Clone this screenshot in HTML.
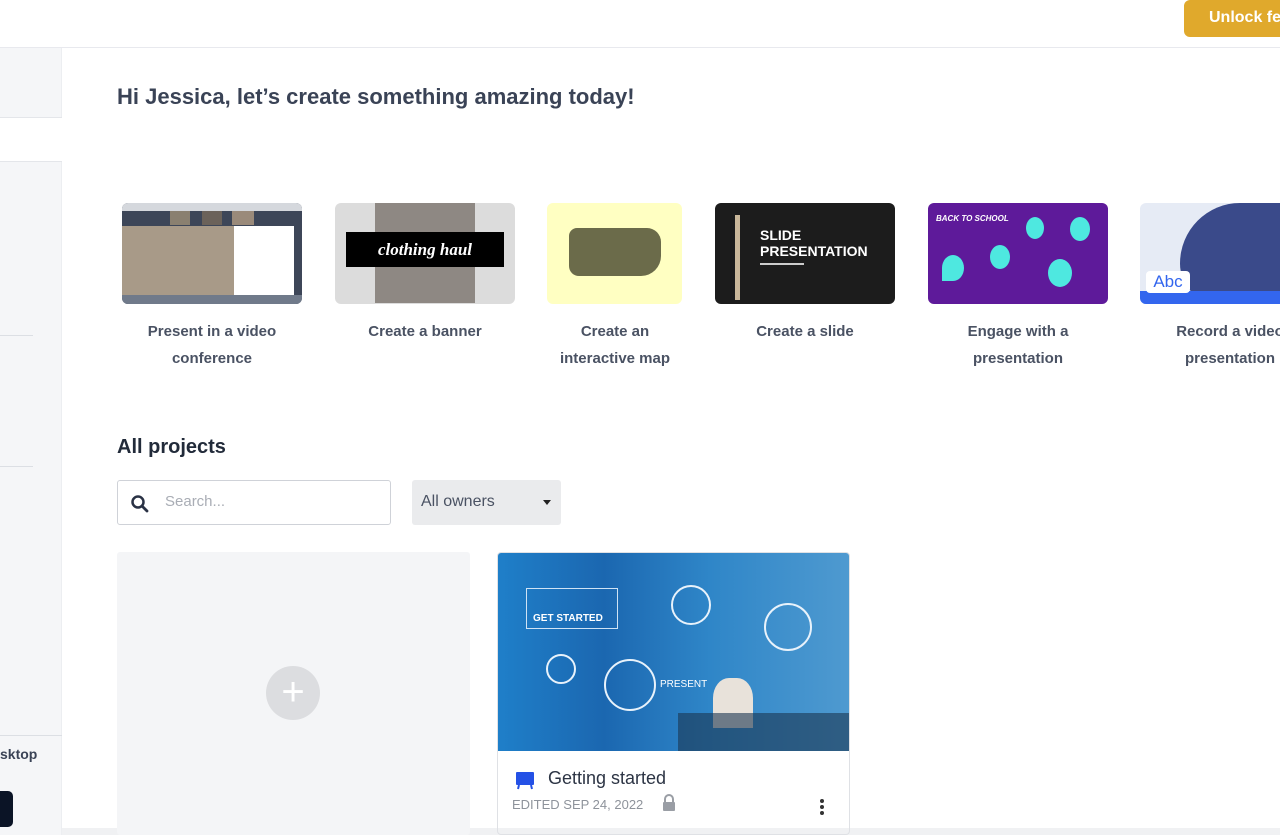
<!DOCTYPE html>
<html><head><meta charset="utf-8"><style>
*{margin:0;padding:0;box-sizing:border-box}
body{width:1280px;height:835px;overflow:hidden;background:#fff;font-family:"Liberation Sans",sans-serif;position:relative;color:#333d4f}
.abs{position:absolute}
.side{left:0;top:48px;width:62px;height:787px;background:#f5f6f8;border-right:1px solid #eceef1}
.cap{font-size:15px;color:#4a5263;text-align:center;line-height:27px;font-weight:bold}
.th{border-radius:6px;overflow:hidden;top:203px;height:101px}
</style></head><body>
<div class="abs" style="left:0;top:47px;width:1280px;height:1px;background:#e8e9ee"></div>
<div class="abs" style="left:1184px;top:0;width:110px;height:37px;background:#e0a92c;border-radius:0 0 0 6px;border-radius:6px;color:#fff;font-weight:bold;font-size:16px;line-height:36px;padding-left:25px">Unlock fe</div>
<div class="abs side"></div>
<div class="abs" style="left:0;top:117px;width:62px;height:45px;background:#fff;border-top:1px solid #e4e6ea;border-bottom:1px solid #e4e6ea"></div>
<div class="abs" style="left:0;top:335px;width:33px;height:1px;background:#dcdfe4"></div>
<div class="abs" style="left:0;top:466px;width:33px;height:1px;background:#dcdfe4"></div>
<div class="abs" style="left:0;top:735px;width:62px;height:1px;background:#dcdfe4"></div>
<div class="abs" style="left:0;top:746px;font-size:14px;font-weight:bold;color:#3a4356">sktop</div>
<div class="abs" style="left:0;top:791px;width:13px;height:36px;background:#0b1426;border-radius:0 5px 5px 0"></div>
<div class="abs" style="left:62px;top:828px;width:1218px;height:7px;background:#f0f1f3"></div>

<div class="abs" style="left:117px;top:84px;font-size:22px;font-weight:bold;color:#3a4356">Hi Jessica, let’s create something amazing today!</div>

<div class="abs th" style="left:122px;width:180px;background:#3d4658">
 <div class="abs" style="left:0;top:0;width:180px;height:8px;background:#d5d8dd"></div>
 <div class="abs" style="left:48px;top:8px;width:20px;height:14px;background:#8a8070"></div>
 <div class="abs" style="left:80px;top:8px;width:20px;height:14px;background:#6b625a"></div>
 <div class="abs" style="left:110px;top:8px;width:22px;height:14px;background:#9a8a7a"></div>
 <div class="abs" style="left:0;top:23px;width:112px;height:70px;background:#a89a88"></div>
 <div class="abs" style="left:112px;top:23px;width:60px;height:70px;background:#fff"></div>
 <div class="abs" style="left:0;top:92px;width:180px;height:9px;background:#707a8a"></div>
</div>
<div class="abs th" style="left:335px;width:180px;background:#dcdcdc">
 <div class="abs" style="left:40px;top:0;width:100px;height:100px;background:#5a5048;opacity:.6"></div>
 <div class="abs" style="left:11px;top:29px;width:158px;height:35px;background:#000;color:#fff;font-family:'Liberation Serif',serif;font-style:italic;font-weight:bold;font-size:17px;text-align:center;line-height:35px">clothing haul</div>
</div>
<div class="abs th" style="left:547px;width:135px;background:#ffffc2">
 <div class="abs" style="left:22px;top:25px;width:92px;height:48px;background:#6b6b4a;border-radius:8px 14px 20px 10px"></div>
</div>
<div class="abs th" style="left:715px;width:180px;background:#1c1c1c;color:#fff">
 <div class="abs" style="left:45px;top:24px;font-size:14px;font-weight:bold;line-height:16px">SLIDE<br>PRESENTATION</div>
 <div class="abs" style="left:45px;top:60px;width:44px;height:2px;background:#ccc"></div>
 <div class="abs" style="left:20px;top:12px;width:5px;height:85px;background:#c9b79a"></div>
</div>
<div class="abs th" style="left:928px;width:180px;background:#5e1a9a;color:#fff">
 <div class="abs" style="left:8px;top:11px;font-size:8px;font-weight:bold;font-style:italic">BACK TO SCHOOL</div>
 <div class="abs" style="left:14px;top:52px;width:22px;height:26px;background:#4ee8e0;border-radius:50% 50% 50% 0"></div>
 <div class="abs" style="left:62px;top:42px;width:20px;height:24px;background:#4ee8e0;border-radius:50%"></div>
 <div class="abs" style="left:98px;top:14px;width:18px;height:22px;background:#4ee8e0;border-radius:50%"></div>
 <div class="abs" style="left:142px;top:14px;width:20px;height:24px;background:#4ee8e0;border-radius:50%"></div>
 <div class="abs" style="left:120px;top:56px;width:24px;height:28px;background:#4ee8e0;border-radius:50%"></div>
</div>
<div class="abs th" style="left:1140px;width:140px;background:#e6ebf5;border-radius:6px 0 0 6px">
 <div class="abs" style="left:40px;top:0;width:100px;height:101px;background:#3a4a8a;border-radius:60% 0 0 40%"></div>
 <div class="abs" style="left:0;top:88px;width:140px;height:13px;background:#3366ee"></div>
 <div class="abs" style="left:6px;top:68px;width:44px;height:22px;background:#fff;border-radius:4px;color:#3366ee;font-size:17px;text-align:center;line-height:22px">Abc</div>
</div>

<div class="abs cap" style="left:122px;top:318px;width:180px">Present in a video<br>conference</div>
<div class="abs cap" style="left:335px;top:318px;width:180px">Create a banner</div>
<div class="abs cap" style="left:525px;top:318px;width:180px">Create an<br>interactive map</div>
<div class="abs cap" style="left:715px;top:318px;width:180px">Create a slide</div>
<div class="abs cap" style="left:928px;top:318px;width:180px">Engage with a<br>presentation</div>
<div class="abs cap" style="left:1140px;top:318px;width:180px">Record a video<br>presentation</div>

<div class="abs" style="left:117px;top:436px;font-size:20px;font-weight:bold;color:#222b3a">All projects</div>
<div class="abs" style="left:117px;top:480px;width:274px;height:45px;border:1px solid #cfd2d8;border-radius:3px">
 <svg class="abs" style="left:12px;top:13px" width="20" height="20" viewBox="0 0 20 20"><circle cx="8" cy="8" r="5.5" fill="none" stroke="#2a3245" stroke-width="2.5"/><path d="M12 12l5 5" stroke="#2a3245" stroke-width="2.8" stroke-linecap="round"/></svg>
 <div class="abs" style="left:47px;top:12px;font-size:15px;color:#a9adb5">Search...</div>
</div>
<div class="abs" style="left:412px;top:480px;width:149px;height:45px;background:#eaebed;border-radius:3px">
 <div class="abs" style="left:9px;top:13px;font-size:16px;color:#4a5263">All owners</div>
 <div class="abs" style="left:131px;top:20px;border:4px solid transparent;border-top:5px solid #222;border-bottom:0"></div>
</div>

<div class="abs" style="left:117px;top:552px;width:353px;height:283px;background:#f4f5f7;border-radius:3px">
 <div class="abs" style="left:149px;top:114px;width:54px;height:54px;border-radius:50%;background:#dcdde0;color:#fff;font-size:40px;line-height:52px;text-align:center">+</div>
</div>
<div class="abs" style="left:497px;top:552px;width:353px;height:283px;border:1px solid #dfe1e5;border-radius:4px;overflow:hidden">
 <div class="abs" style="left:0;top:0;width:353px;height:198px;background:linear-gradient(90deg,#1f7fc9,#1b67b0 30%,#2f86c8 60%,#4f9ad0)">
  <div class="abs" style="left:28px;top:35px;width:92px;height:41px;border:1px solid #cfe3f5;color:#fff;font-size:10px;font-weight:bold;padding:25px 0 0 6px;line-height:10px">GET STARTED</div>
  <div class="abs" style="left:173px;top:32px;width:40px;height:40px;border:2px solid #e8f2fb;border-radius:50%"></div>
  <div class="abs" style="left:266px;top:50px;width:48px;height:48px;border:2px solid #e8f2fb;border-radius:50%"></div>
  <div class="abs" style="left:48px;top:101px;width:30px;height:30px;border:2px solid #e8f2fb;border-radius:50%"></div>
  <div class="abs" style="left:106px;top:106px;width:52px;height:52px;border:2px solid #e8f2fb;border-radius:50%"></div>
  <div class="abs" style="left:162px;top:126px;color:#fff;font-size:10px">PRESENT</div>
  <div class="abs" style="left:215px;top:125px;width:40px;height:50px;background:#e8e2da;border-radius:40% 40% 0 0"></div>
  <div class="abs" style="left:180px;top:160px;width:173px;height:38px;background:#1b3550;opacity:.6"></div>
 </div>
 <svg class="abs" style="left:17px;top:217px" width="20" height="20" viewBox="0 0 20 20"><rect x="1" y="2" width="18" height="13" rx="1" fill="#2451e6"/><path d="M4 15l-1 4M16 15l1 4" stroke="#2451e6" stroke-width="2"/></svg>
 <div class="abs" style="left:50px;top:215px;font-size:18px;color:#2c3444">Getting started</div>
 <div class="abs" style="left:14px;top:244px;font-size:13px;color:#8e939b">EDITED SEP 24, 2022</div>
 <svg class="abs" style="left:164px;top:241px" width="14" height="18" viewBox="0 0 14 18"><path d="M3 8V5a4 4 0 018 0v3" fill="none" stroke="#9a9ea5" stroke-width="2"/><rect x="1" y="8" width="12" height="9" rx="1" fill="#9a9ea5"/></svg>
 <div class="abs" style="left:322px;top:246px;width:4px;height:4px;border-radius:50%;background:#333;box-shadow:0 6px 0 #333,0 12px 0 #333"></div>
</div>
</body></html>
